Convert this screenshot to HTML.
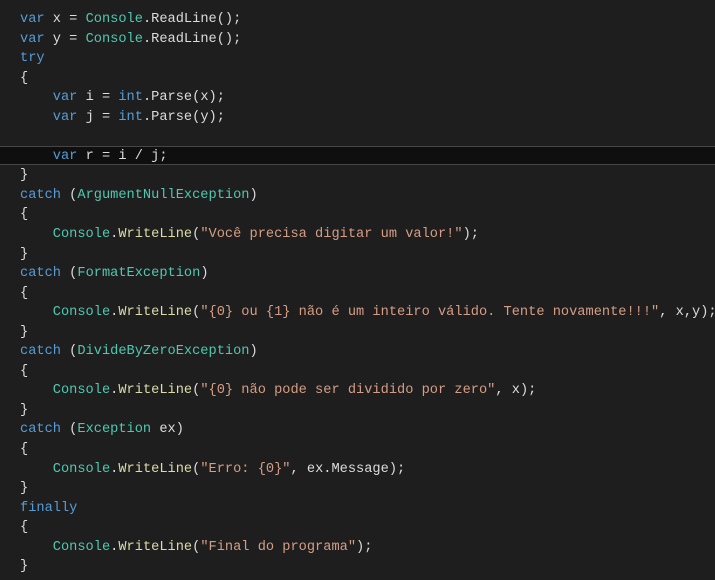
<!DOCTYPE html>
<html><head><meta charset="utf-8"><style>
html,body{margin:0;padding:0;background:#1e1e1e;width:715px;height:580px;overflow:hidden}
pre{margin:0;padding:10px 0 0 20px;font-family:"Liberation Mono",monospace;font-size:13.66px;line-height:19.54px;color:#dcdcdc;white-space:pre;position:relative}
.k{color:#569cd6}.t{color:#4ec9b0}.s{color:#d69d85}.m{color:#dcdcaa}
.cur{position:absolute;left:0;top:146px;width:715px;height:17px;border-top:1px solid #464646;border-bottom:1px solid #464646;background:#0f0f0f}
pre span.l{position:relative}
</style></head><body>
<div class="cur"></div>
<pre><span class="l"><span class="k">var</span> x = <span class="t">Console</span>.ReadLine();
<span class="k">var</span> y = <span class="t">Console</span>.ReadLine();
<span class="k">try</span>
{
    <span class="k">var</span> i = <span class="k">int</span>.Parse(x);
    <span class="k">var</span> j = <span class="k">int</span>.Parse(y);

    <span class="k">var</span> r = i / j;
}
<span class="k">catch</span> (<span class="t">ArgumentNullException</span>)
{
    <span class="t">Console</span>.<span class="m">WriteLine</span>(<span class="s">"Você precisa digitar um valor!"</span>);
}
<span class="k">catch</span> (<span class="t">FormatException</span>)
{
    <span class="t">Console</span>.<span class="m">WriteLine</span>(<span class="s">"{0} ou {1} não é um inteiro válido. Tente novamente!!!"</span>, x,y);
}
<span class="k">catch</span> (<span class="t">DivideByZeroException</span>)
{
    <span class="t">Console</span>.<span class="m">WriteLine</span>(<span class="s">"{0} não pode ser dividido por zero"</span>, x);
}
<span class="k">catch</span> (<span class="t">Exception</span> ex)
{
    <span class="t">Console</span>.<span class="m">WriteLine</span>(<span class="s">"Erro: {0}"</span>, ex.Message);
}
<span class="k">finally</span>
{
    <span class="t">Console</span>.<span class="m">WriteLine</span>(<span class="s">"Final do programa"</span>);
}</span></pre>
</body></html>
